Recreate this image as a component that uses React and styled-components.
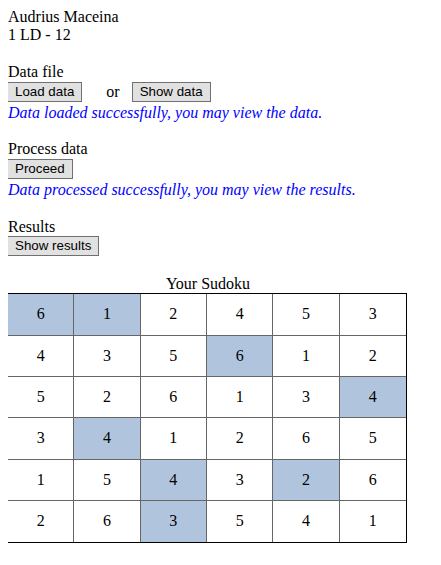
import React from "react";
import styled, { createGlobalStyle } from "styled-components";

const Global = createGlobalStyle`
  html, body { margin: 0; padding: 0; background: #fff; }
  body {
    margin: 8px;
    font-family: "Liberation Serif", "Times New Roman", serif;
    font-size: 16px;
    line-height: 18.4px;
    color: #000;
  }
`;

const Page = styled.div`
  display: flex;
  flex-direction: column;
`;

const Line = styled.div`
  height: 18.4px;
`;

const Section = styled.section`
  display: flex;
  flex-direction: column;
  margin-top: 18.4px;
`;

const ButtonRow = styled.div`
  display: flex;
  align-items: flex-start;
  height: ${(p) => p.$h || 22}px;
  padding-top: ${(p) => p.$pt ?? 0}px;
  margin-left: -1px;
  box-sizing: border-box;
`;

const Button = styled.button`
  font-family: "Liberation Sans", Arial, sans-serif;
  font-size: 13.333px;
  line-height: 16px;
  height: 20px;
  padding: 0 7px;
  margin: 0;
  background: #e1e1e1;
  border: 1px solid #707070;
  border-radius: 0;
  color: #000;
  box-sizing: border-box;
`;

const Or = styled.span`
  margin: 0 12px 0 24px;
  line-height: 20px;
`;

const Message = styled.div`
  color: #0000ff;
  font-style: italic;
  height: 18.4px;
`;

const Caption = styled.div`
  width: 400px;
  text-align: center;
  height: 18.4px;
`;

const Grid = styled.div`
  display: grid;
  grid-template-columns: repeat(6, 1fr);
  grid-template-rows: repeat(6, 1fr);
  width: 400px;
  height: 250px;
  margin-left: -1px;
  border: 1px solid #000;
  box-sizing: border-box;
`;

const Cell = styled.div`
  display: flex;
  align-items: center;
  justify-content: center;
  background: ${(p) => (p.$hl ? "#b0c4de" : "#fff")};
  border-right: ${(p) => (p.$lastCol ? "none" : "1px solid #666")};
  border-bottom: ${(p) => (p.$lastRow ? "none" : "1px solid #666")};
`;

const SudokuWrap = styled.div`
  margin-top: 17px;
  display: flex;
  flex-direction: column;
`;

const board = [
  [6, 1, 2, 4, 5, 3],
  [4, 3, 5, 6, 1, 2],
  [5, 2, 6, 1, 3, 4],
  [3, 4, 1, 2, 6, 5],
  [1, 5, 4, 3, 2, 6],
  [2, 6, 3, 5, 4, 1],
];

const highlighted = [
  [0, 0], [0, 1], [1, 3], [2, 5], [3, 1], [4, 2], [4, 4], [5, 2],
];

const isHl = (r, c) => highlighted.some(([a, b]) => a === r && b === c);

export default function App() {
  return (
    <>
      <Global />
      <Page>
        <Line>Audrius Maceina</Line>
        <Line>1 LD - 12</Line>

        <Section>
          <Line>Data file</Line>
          <ButtonRow $h={22} $pt={0.6}>
            <Button>Load data</Button>
            <Or>or</Or>
            <Button>Show data</Button>
          </ButtonRow>
          <Message>Data loaded successfully, you may view the data.</Message>
        </Section>

        <Section>
          <Line>Process data</Line>
          <ButtonRow $h={22} $pt={0}>
            <Button>Proceed</Button>
          </ButtonRow>
          <Message>Data processed successfully, you may view the results.</Message>
        </Section>

        <Section>
          <Line>Results</Line>
          <ButtonRow $h={22} $pt={0}>
            <Button>Show results</Button>
          </ButtonRow>
        </Section>

        <SudokuWrap>
          <Caption>Your Sudoku</Caption>
          <Grid>
            {board.map((row, r) =>
              row.map((v, c) => (
                <Cell
                  key={`${r}-${c}`}
                  $hl={isHl(r, c)}
                  $lastCol={c === 5}
                  $lastRow={r === 5}
                >
                  {v}
                </Cell>
              ))
            )}
          </Grid>
        </SudokuWrap>
      </Page>
    </>
  );
}
